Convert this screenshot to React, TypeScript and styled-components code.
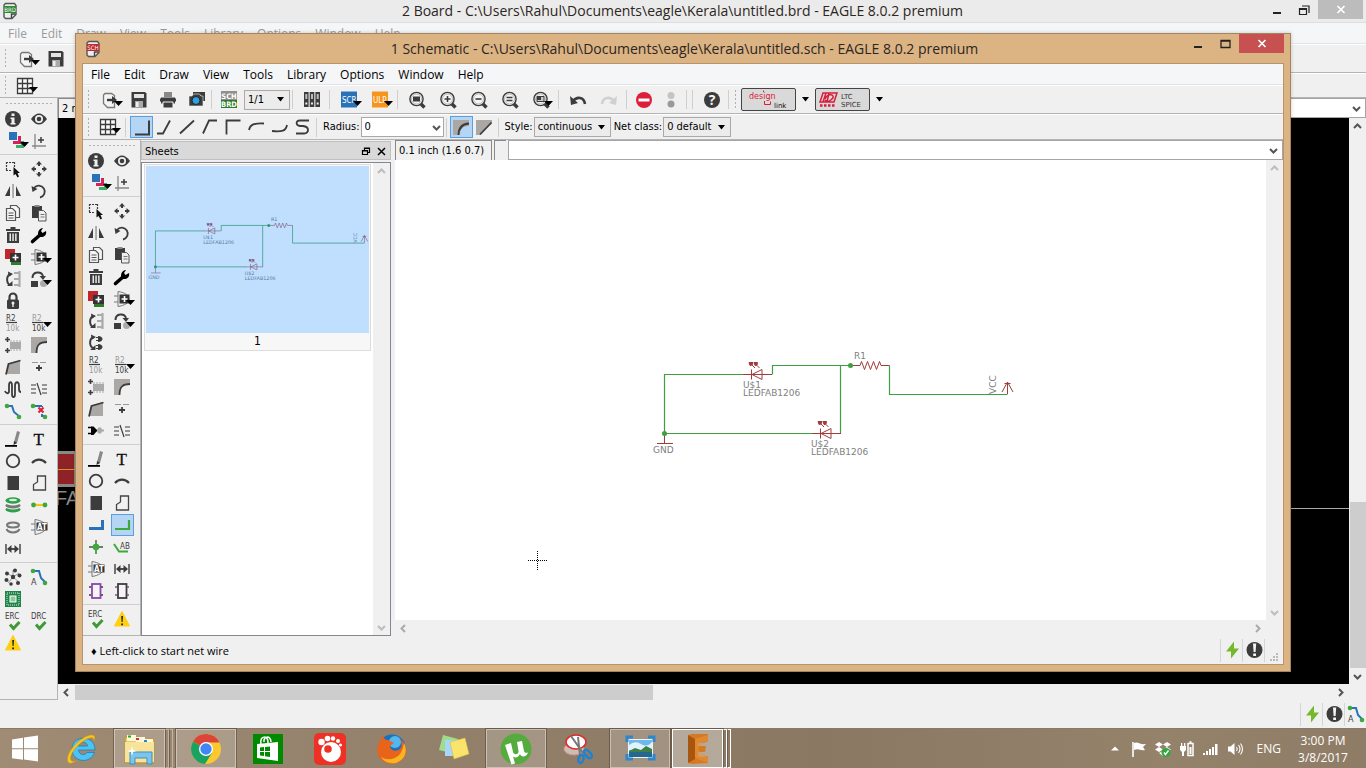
import React from "react";
import type { ReactNode } from "react";
import styled, { createGlobalStyle, css } from "styled-components";

const ui = '"DejaVu Sans Condensed", "DejaVu Sans", sans-serif';
const segoe = '"Open Sans", "Noto Sans", sans-serif';
const ink = "#3c3c3c";

const GlobalStyle = createGlobalStyle`
  * { box-sizing: border-box; }
  body { margin: 0; overflow: hidden; font: 11px/16px ${ui}; color: #000; }
  button, input, select { font: inherit; color: inherit; margin: 0; padding: 0; border: 0; background: none; border-radius: 0; outline: none; }
  svg { display: block; overflow: visible; flex: none; }
  h1, h2, p, ul { margin: 0; padding: 0; font-weight: normal; list-style: none; }
`;

/* ---------- drawings ---------- */

const Arr = ({ x, y }: { x: number; y: number }) => (
  <path d={`M${x} ${y}h9l-4.5 5z`} fill="#000" />
);
const Lens = ({ children }: { children?: ReactNode }) => (
  <g>
    <path d="M15.5 13.5l4 4" stroke={ink} strokeWidth="3.4" />
    <circle cx="11.5" cy="9" r="6.6" fill="#f5f5f5" stroke={ink} strokeWidth="1.4" />
    <circle cx="11.5" cy="9" r="5" fill="none" stroke="#aaa" strokeWidth=".8" />
    {children}
  </g>
);
const Line = ({ d, c = ink, w = 1.8 }: { d: string; c?: string; w?: number }) => (
  <path d={d} fill="none" stroke={c} strokeWidth={w} />
);
const Txt = ({ x, y, s, c = ink, children }: { x: number; y: number; s: number; c?: string; children: string }) => (
  <text x={x} y={y} fontSize={s} fill={c} fontFamily="DejaVu Sans Condensed, sans-serif">{children}</text>
);
const check = <path d="M9 13.500l3.500 4l6-6.500" fill="none" stroke="#3f9a35" strokeWidth="3" />;
const Gate = () => (
  <g fill="none" stroke="#777" strokeWidth="1">
    <path d="M8 2.500c7 1 11 4 11 7.500s-4 6.500-11 7.500zM4 7h4M4 13h4" />
  </g>
);

const icons: Record<string, ReactNode> = {
  info: <g><circle cx="12" cy="10" r="8" fill={ink} /><path d="M10.500 4.500h3v2.500h-3zM9.500 8.500h4v5.500h1v1.500h-5v-1.500h1v-4h-1z" fill="#f0f0f0" /></g>,
  eye: <g><path d="M4 10Q12-1 20 10Q12 21 4 10z" fill={ink} /><circle cx="12" cy="10" r="4" fill="#f0f0f0" /><circle cx="12" cy="10" r="2.300" fill={ink} /></g>,
  layers: <g><path d="M8 1h8v8h-8z" fill="#2a72b8" /><path d="M17 5h3v8h-8v-3h5z" fill="#d81e5b" /><path d="M20 10h3v7h-8v-3h5z" fill="#3aae68" /><Arr x={19} y={11} /></g>,
  origin: <g><Line d="M8 3v15M5 15h14" c="#888" w={1.300} /><Line d="M14 6v6M11 9h6" w={1.500} /></g>,
  group: <g><path d="M5 3.500h9M5 11.500h6M5.500 3v9M13.500 3v5" stroke={ink} fill="none" strokeDasharray="2 1" strokeWidth="1.200" /><path d="M12.500 8v8.500l2-1.500 2 3.500 1.500-1-1.500-3.500h2.500z" fill="#111" /></g>,
  move: <g fill={ink}><path d="M12 2l3 3.500h-2v1.500h-2v-1.500h-2zM12 18l3-3.500h-2v-1.500h-2v1.500h-2zM4 10l3.500-3v2h1.500v2h-1.500v2zM20 10l-3.500-3v2h-1.500v2h1.500v2z" /></g>,
  mirror: <g fill={ink}><path d="M9 5v10h-5zM15 5v10h5z" /><path d="M11.300 3h1.500v14h-1.500z" fill="#999" /></g>,
  rotate: <g><Line d="M7 7a6 6 0 1 1 6 9.500" w={1.800} /><path d="M4.500 5l1 6 5-3z" fill={ink} /></g>,
  copy: <g fill="#f4f4f4" stroke="#555" strokeWidth="1.200"><path d="M9.500 2.500h6l3 3v9h-9z" /><path d="M5.500 5.500h6l3 3v9h-9z" /><path d="M7.500 10h5M7.500 12.500h5M7.500 15h5" /></g>,
  paste: <g><path d="M5 3h10v12h-10z" fill={ink} /><path d="M7.500 2h5v2h-5z" fill="#888" /><path d="M11.500 7.500h5l2.500 2.500v8h-7.500z" fill="#eee" stroke="#555" /><Line d="M13.500 11.500h4M13.500 14h4" c="#777" w={1} /></g>,
  trash: <g fill={ink}><path d="M5 4h14v2h-14zM9.500 2h5v2h-5z" /><path d="M6 7h12v11h-12z" /><path d="M8.500 8.500h1.500v7.500h-1.500zM11.300 8.500h1.500v7.500h-1.500zM14.100 8.500h1.500v7.500h-1.500z" fill="#e8e8e8" /></g>,
  wrench: <g><path d="M5.500 16.500l8-7" stroke="#000" strokeWidth="3.600" strokeLinecap="round" /><path d="M11 10c0-4 1-6.500 5-7l-2 3 1.500 2 3.500-2c1 4-2 6.500-6 6z" fill="#000" /></g>,
  add: <g><path d="M4 2h10v10h-10z" fill="#c0272d" /><path d="M10 12h10v6h-10z" fill="#2f7d2a" /><path d="M9 6h11v9h-11z" fill="#333" /><Line d="M14.500 7.500v6M11.500 10.500h6" c="#fff" w={1.600} /></g>,
  gateAdd: <g><Gate /><path d="M9.500 5.500h10v9h-10z" fill="#333" /><Line d="M14.500 7v6M11.500 10h6" c="#fff" w={1.600} /><Arr x={16} y={11} /></g>,
  pinswap: <g><Line d="M10 5c-5 1-5 9-1 11" w={2} /><path d="M7 2.500l5 2.500-4.500 3zM6 17h5.500v-5z" fill={ink} /><Line d="M18.500 2v16M13 4h5M13 10h5M13 16h5" c="#aaa" w={2.200} /></g>,
  replace: <g><path d="M4 12h7v6h-7z" fill={ink} /><circle cx="16.500" cy="14.500" r="3.500" fill="#aaa" /><Line d="M5.500 9c0-7 9-7 10.500-2" w={2} /><path d="M12.500 7h6.500l-3 4z" fill={ink} /><Arr x={16} y={11} /></g>,
  gateswap: <g><Line d="M10 4c-5 1-5 9-1 11" w={2} /><path d="M7 1.500l5 2.500-4.500 3zM6 17h5.500v-5z" fill={ink} /><path d="M14 3c6 0 6 6 0 6zM14 11c6 0 6 6 0 6z" fill={ink} /><Line d="M12 4.500h2M12 7.500h2M12 12.500h2M12 15.500h2" w={1} /></g>,
  lock: <g><Line d="M8.500 9v-3a3.500 3.500 0 0 1 7 0v3" w={2.200} /><rect x="6" y="8.500" width="12" height="9.500" rx="1.500" fill={ink} /><circle cx="12" cy="12" r="1.500" fill="#f0f0f0" /><path d="M11.300 12h1.400v4h-1.400z" fill="#f0f0f0" /></g>,
  name: <g><Txt x={5} y={8} s={8}>R2</Txt><Line d="M5 9.500h11" w={1.200} /><Txt x={5} y={18} s={8} c="#999">10k</Txt></g>,
  value: <g><Txt x={5} y={8} s={8} c="#999">R2</Txt><Line d="M5 9.500h11" w={1.200} /><Txt x={5} y={18} s={8}>10k</Txt><Arr x={16} y={9} /></g>,
  smash: <g><path d="M9 7h11v7h-11z" fill="#aaa" /><path d="M10 5v11M13 5v11M16 5v11M19 5v11" stroke="#aaa" /><Line d="M6.500 2v5M4 4.500h5M6.500 13v5M4 15.500h5" w={1.600} /></g>,
  miter: <g><path d="M4 2h16v4c-6 0-8 4-8 12h-8z" fill="#aba7a5" /><path d="M10 18v-2c0-5 2-8 10-8v10z" fill="#f0f0f0" /><Line d="M9.500 18c0-8 3-11 10.500-11" w={1.800} /></g>,
  split: <g><path d="M5 17l2-10 12-4v14z" fill="#aba7a5" /><Line d="M5 17.500l2.500-10.500 12-3.500" w={1.800} /></g>,
  optimize: <g><Line d="M5 5.500h6M13 5.500h6" c="#999" w={1.200} /><Line d="M12 8v6M9 11h6" w={1.800} /></g>,
  meander: <Line d="M4 12c1 3 4 3 4 0v-5c0-5 3-5 3 0v8c0 4 3 4 3 0v-8c0-5 4-5 4 0v3q0 3 2 3" w={1.800} />,
  bus: <g><Line d="M4 6h5M4 10h5M4 14h5M15 6h5M15 10h5M15 14h5" c="#777" w={1.400} /><Line d="M10 4l4 12" w={1.200} /></g>,
  invoke: <g><path d="M4 6.500h4M4 12.500h4" stroke="#000" strokeWidth="1.500" /><path d="M7 5.500h2.500l4 4-4 4.500h-2.500z" fill="#000" /><path d="M20 8.500h-2c-1-4-5-2-5 1s4 5 5 1h2z" fill="#aaa" /></g>,
  route: <g><Line d="M6 5h5l2 6 6 5" c="#2a72b8" w={2} /><circle cx="6" cy="5" r="2.300" fill="#3fa83c" /><circle cx="18" cy="16" r="2.300" fill="#3fa83c" /></g>,
  ripup: <g><Line d="M6 5h9M15 5v10h4" c="#2a72b8" w={2} /><circle cx="6" cy="5" r="2.300" fill="#3fa83c" /><circle cx="18" cy="16" r="2.300" fill="#3fa83c" /><path d="M10 6h8v7h-8z" fill="#f0f0f0" /><Line d="M11.500 6.500l5 5M16.500 6.500l-5 5" c="#e0213a" w={2.200} /></g>,
  pencil: <g><path d="M16 2l3 1-3 11-3 1 0-2z" fill="#888" /><path d="M13 12l3 2-3.500 2z" fill="#333" /><path d="M4 16h12v1.800h-12z" fill="#000" /></g>,
  text: <text x="6.500" y="15.500" fontFamily="Liberation Serif, serif" fontSize="17" fill="#111" stroke="#111" strokeWidth=".3">T</text>,
  circle: <circle cx="12" cy="10" r="6.300" fill="none" stroke={ink} strokeWidth="1.800" />,
  arc: <Line d="M5 12c4-4.500 10-4.500 14 0" w={2.200} />,
  rect: <path d="M6.500 3h11.500v14h-11.500z" fill={ink} />,
  polygon: <Line d="M6.500 17v-5.500l4-2.500v-6h8v14z" c="#444" w={1.300} />,
  via: <g><ellipse cx="12" cy="14.500" rx="7.500" ry="3" fill="#2e9f48" /><ellipse cx="12" cy="11.500" rx="7.500" ry="3" fill="#f0f0f0" /><ellipse cx="12" cy="10.500" rx="7.500" ry="3" fill="#777" /><ellipse cx="12" cy="7.500" rx="7.500" ry="3" fill="#f0f0f0" /><ellipse cx="12" cy="5.500" rx="7.500" ry="3.300" fill="#2e9f48" /><ellipse cx="12" cy="5" rx="4" ry="1.200" fill="#d6f0d8" /></g>,
  signal: <g><Line d="M6 10h12" c="#f5c518" w={2.200} /><circle cx="6.500" cy="10" r="2.400" fill="#3fa83c" /><circle cx="18" cy="10" r="2.400" fill="#3fa83c" /></g>,
  hole: <g fill="none" stroke="#777" strokeWidth="2"><ellipse cx="12" cy="8" rx="6" ry="2.500" /><path d="M5.500 12c2 4.500 11 4.500 13 0" /></g>,
  attribute: <g><Gate /><path d="M9.500 5.500h11v8h-11z" fill="#333" /><text x="10" y="12.500" fontSize="8" fontWeight="bold" fill="#fff" fontFamily="DejaVu Sans Condensed, sans-serif">AT</text></g>,
  dimension: <g><Line d="M5 5v10M19 5v10" w={1.400} /><Line d="M7 10h10" w={1.800} /><path d="M6 10l4.500-4v8zM18 10l-4.500-4v8z" fill={ink} /></g>,
  ratsnest: <g><path d="M6 6l6 4M12 3v7M18 6l-6 4M12 10l6 5M12 10l-5 6" stroke="#999" /><g fill={ink}><circle cx="12" cy="10" r="2.200" /><circle cx="6" cy="6.500" r="2" /><circle cx="14" cy="3.500" r="2" /><circle cx="18.500" cy="8.500" r="2" /><circle cx="17" cy="16" r="2" /><circle cx="10" cy="17" r="1.800" /><circle cx="5.500" cy="13" r="2" /></g></g>,
  autoroute: <g><Line d="M6 4h6l2 7 5 5" c="#2a72b8" w={2} /><circle cx="6" cy="4" r="2.300" fill="#3fa83c" /><circle cx="18" cy="16" r="2.300" fill="#3fa83c" /><Txt x={4} y={18} s={9}>A</Txt></g>,
  drcbox: <g><path d="M4 2h16v16h-16z" fill="#1e8449" /><rect x="6" y="4" width="12" height="12" fill="none" stroke="#d9f0de" strokeDasharray="1 1" /><rect x="9" y="7" width="6" height="6" fill="#8bc99a" stroke="#fff" /></g>,
  erc: <g><Txt x={4} y={8} s={8}>ERC</Txt>{check}</g>,
  drc: <g><Txt x={4} y={8} s={8}>DRC</Txt>{check}</g>,
  warning: <g><path d="M12 2.500l7.500 14.500h-15z" fill="#ffcf10" stroke="#ffcf10" strokeLinejoin="round" /><path d="M11.200 7h1.800l-.4 6h-1zM11.200 14.500h1.800v1.700h-1.800z" fill="#222" /></g>,
  busline: <Line d="M5 13.500h13.500v-8.500" c="#2a72b8" w={3} />,
  net: <Line d="M5 14h14v-9" c="#3fa83c" w={2.200} />,
  junction: <g><Line d="M12 3v14M5 10h14" c="#3a5a3a" w={1.300} /><circle cx="12" cy="10" r="3.300" fill="#3fa83c" /></g>,
  label: <g><Line d="M4 7l5 7.500h9" c="#3fa83c" w={2} /><Txt x={10} y={12} s={8}>AB</Txt></g>,
  module: <g><rect x="8" y="3" width="8.500" height="14" fill="#f4f4f4" stroke="#8e44ad" strokeWidth="1.800" /><Line d="M5 6h2M5 14h2M17 6h2M17 14h2" w={1.400} /></g>,
  port: <g><rect x="8" y="3" width="8.500" height="14" fill="#f4f4f4" stroke={ink} strokeWidth="1.800" /><Line d="M5 6h2M5 14h2M17 6h2M17 14h2" c="#8e44ad" w={1.600} /></g>,
  open: <g><path d="M7 3.500h6.500l3 2v12h-7l-4-4v-8.500z" fill="#f3f3f3" stroke="#777" strokeWidth="1.300" /><Line d="M9 10h6" w={2.400} /><path d="M14 6l5 4-5 4z" fill={ink} /><Arr x={16} y={11} /></g>,
  save: <g><path d="M4.500 2h13.500l1.500 1.500v14h-15z" fill={ink} /><path d="M7 4h10v4h-10z" fill="#e4e4e4" /><path d="M8 11h8v6.500h-8z" fill="#aaa" /><path d="M9 12h2.500v5h-2.500z" fill="#eee" /></g>,
  print: <g><path d="M8 2h8v5h-8z" fill="#888" /><path d="M5 7.500h14v6h-14zM4 8.500h16v3h-16z" fill={ink} /><path d="M7 12h10v6h-10z" fill={ink} stroke="#f0f0f0" /></g>,
  camera: <g><path d="M8 2h12v9h-4v-6h-8z" fill={ink} /><path d="M4 6h3l1.500-2h6l1.500 2h2v10h-14z" fill={ink} stroke="#f0f0f0" strokeWidth=".6" /><circle cx="11" cy="10.500" r="4" fill="#2e9fe0" stroke="#222" /></g>,
  schbrd: <g><path d="M4 1h16v9h-16z" fill="#8f8f8f" /><path d="M4 10h16v8h-16z" fill="#2a7a2a" /><text x="12" y="8.500" textAnchor="middle" fontSize="7.500" fontWeight="bold" fill="#fff" fontFamily="DejaVu Sans Condensed">SCH</text><text x="12" y="17" textAnchor="middle" fontSize="7.500" fontWeight="bold" fill="#fff" fontFamily="DejaVu Sans Condensed">BRD</text></g>,
  library: <g><path d="M4 2h4.600v15h-4.600zM9.700 2h4.600v15h-4.600zM15.400 2h4.600v15h-4.600z" fill={ink} /><path d="M5.300 4h2v5h-2zM11 4h2v5h-2zM16.700 4h2v5h-2z" fill="#bbb" /><path d="M5.300 12.500h2v2h-2zM11 12.500h2v2h-2zM16.700 12.500h2v2h-2z" fill="#eee" /></g>,
  scr: <g><path d="M4 1.500h16v16h-16z" fill="#2a72b8" /><Txt x={5} y={13} s={8} c="#fff">SCR</Txt><Arr x={16} y={11} /></g>,
  ulp: <g><path d="M4 1.500h16v16h-16z" fill="#f7941e" /><Txt x={5} y={13} s={8} c="#fff">ULP</Txt><Arr x={16} y={11} /></g>,
  fit: <Lens><path d="M8 6.500h7v5h-7z" fill={ink} /></Lens>,
  zoomin: <Lens><Line d="M8.500 9h6M11.500 6v6" w={1.600} /></Lens>,
  zoomout: <Lens><Line d="M8.500 9h6" w={1.600} /></Lens>,
  redraw: <Lens><Line d="M8.500 7.500h6M8.500 10.500h6" w={1.500} /></Lens>,
  zoomsel: <g><Lens><path d="M8 6.500h7v5h-7z" fill="#ccc" stroke={ink} /><path d="M8 6.500h4v3.500h-4z" fill={ink} /></Lens><Arr x={15} y={11} /></g>,
  undo: <g><Line d="M19 14c-1-7-8-8-12-3" w={2.600} /><path d="M4 6l1 9 7-2z" fill={ink} /></g>,
  redo: <g><Line d="M5 14c1-7 8-8 12-3" w={2.600} c="#d0d0d0" /><path d="M20 6l-1 9-7-2z" fill="#d0d0d0" /></g>,
  stop: <g><circle cx="12" cy="10" r="8" fill="#dd1e3a" /><path d="M6.500 8.500h11v3h-11z" fill="#fff" /></g>,
  go: <g><circle cx="12" cy="5.500" r="3.500" fill="#c4c4c4" /><circle cx="12" cy="14" r="3.500" fill="#999" /></g>,
  help: <g><circle cx="12" cy="10" r="8" fill={ink} /><text x="12" y="15" textAnchor="middle" fontSize="14" fontWeight="bold" fill="#f4f4f4" fontFamily="Open Sans, sans-serif">?</text></g>,
  grid: <g><path d="M4.500 2.500h15v15h-15zM4.500 7.500h15M4.500 12.500h15M9.500 2.500v15M14.500 2.500v15" fill="#fafafa" stroke={ink} strokeWidth="1.300" /><Arr x={16} y={11} /></g>,
  b0: <Line d="M5 17.500h14v-14" w={2} />,
  b1: <Line d="M4 16.500h6l7-13" />,
  b2: <Line d="M4 16.500l14-13" />,
  b3: <Line d="M4 16.500l6-13h8" />,
  b4: <Line d="M4.500 17.500v-14h14" />,
  b5: <Line d="M4 13c1-5 4-7 15-6.500" />,
  b6: <Line d="M4 14c10 1 14 0 15-6" />,
  b7: <Line d="M18 3.500h-9c-5 0-4 5 0 5.500h3c7 1 6 7 1 7.500h-8" />,
  miterRound: <g><path d="M4 3h16v15h-16z" fill="#aba7a5" /><path d="M11 18c0-6 3-9 9-9v9z" fill="#b5d5f5" /><Line d="M9.500 18c0-7 3-11 10.500-11.500" w={1.800} /></g>,
  miterFlat: <g><path d="M4 3h16v3l-12 12h-4z" fill="#aba7a5" /><Line d="M8 17.500l11.500-12" w={1.800} /></g>,
  bolt: <path d="M14 1.500l-8 10h5l0 7 8-10h-5z" fill="#76b82a" />,
  alert: <g><circle cx="12.500" cy="10" r="8" fill={ink} /><path d="M11 3.500h3.200l-.6 8.500h-2zM11.200 13.500h2.800v2.500h-2.800z" fill="#f4f4f4" /></g>,
};

const Icon = ({ name }: { name: string }) => (
  <svg width="24" height="20" viewBox="0 0 24 20" aria-hidden="true">{icons[name]}</svg>
);
const Down = ({ c = "#000" }: { c?: string }) => (
  <svg width="9" height="5" viewBox="0 0 9 5" aria-hidden="true"><path d="M1 0h7l-3.500 4.500z" fill={c} /></svg>
);
const Chevron = ({ dir, c }: { dir: "up" | "down" | "left" | "right"; c: string }) => {
  const d = { up: "M1 6l3.500-3.500L8 6", down: "M1 3l3.500 3.500L8 3", left: "M6 1L2.500 4.500 6 8", right: "M3 1l3.500 3.500L3 8" }[dir];
  return <svg width="9" height="9" viewBox="0 0 9 9" aria-hidden="true"><path d={d} fill="none" stroke={c} strokeWidth="2" /></svg>;
};

/* ---------- layout parts ---------- */

const Desktop = styled.main`
  position: relative;
  display: flex;
  flex-direction: column;
  height: 100vh;
  overflow: hidden;
  background: #f0f0f0;
`;
const BoardWindow = styled.section`
  flex: 1;
  min-height: 0;
  display: flex;
  flex-direction: column;
`;
const SchematicWindow = styled.section`
  position: absolute;
  inset: 33px 75px 96px;
  display: flex;
  flex-direction: column;
  padding: 0 6px 6px;
  background: #dcb383;
  border: 1px solid #a5845f;
  box-shadow: 0 0 4px rgba(0, 0, 0, 0.2);
`;
const Client = styled.div`
  flex: 1;
  min-height: 0;
  display: flex;
  flex-direction: column;
  background: #f0f0f0;
  border: 1px solid #b8946a;
`;
const TitleBar = styled.header<{ $front?: boolean }>`
  display: grid;
  grid-template-columns: 1fr auto 1fr;
  align-items: center;
  flex: none;
  height: ${(p) => (p.$front ? 29 : 23)}px;
  padding: ${(p) => (p.$front ? "0 0 0 3px" : "0 3px 0 2px")};
  background: ${(p) => (p.$front ? "none" : "#ebebeb")};
  border-bottom: ${(p) => (p.$front ? "0" : "1px solid #dcdfe2")};
`;
const Title = styled.h1`
  text-align: center;
  font: 14px/20px ${segoe};
  color: #2b2622;
  white-space: nowrap;
`;
const Caption = styled.div`
  display: flex;
  align-self: flex-start;
  justify-self: end;
`;
const CaptionButton = styled.button<{ $close?: string }>`
  display: grid;
  place-items: center;
  width: ${(p) => (p.$close ? 45 : 27)}px;
  height: 19px;
  background: ${(p) => p.$close || "none"};
`;
const MenuBar = styled.nav<{ $dim?: boolean }>`
  display: flex;
  align-items: center;
  flex: none;
  height: 21px;
  padding: 1px 0 0 1px;
  background: #f5f6f7;
  border-bottom: 1px solid #e3e4e6;
  color: ${(p) => (p.$dim ? "#9a9a9a" : "#000")};
  font: 12px/18px ${segoe};
`;
const MenuItem = styled.button`
  padding: 0 7px;
`;
const Bar = styled.div<{ $h: number }>`
  display: flex;
  align-items: center;
  flex: none;
  height: ${(p) => p.$h}px;
  border-top: 1px solid #fff;
  border-bottom: 1px solid #b4b4b4;
  white-space: nowrap;
`;
const Grip = styled.i<{ $across?: boolean }>`
  flex: none;
  ${(p) =>
    p.$across
      ? css`height: 3px; margin: 4px 5px 3px; background: radial-gradient(circle, #b0b0b0 1px, transparent 1px) 0 0 / 4px 3px;`
      : css`width: 3px; height: 21px; margin: 0 4px; background: radial-gradient(circle, #b0b0b0 1px, transparent 1px) 0 0 / 3px 4px;`}
`;
const Tool = styled.button<{ $w?: number; $on?: boolean }>`
  display: grid;
  place-content: center;
  flex: none;
  width: ${(p) => p.$w || 31}px;
  height: 22px;
  ${(p) => p.$on && css`background: #b5d5f5; box-shadow: inset 0 0 0 1px #5c9fe0;`}
`;
const Sep = styled.i<{ $gap?: "tight" | "wide" }>`
  flex: none;
  width: 1px;
  height: 19px;
  margin: ${(p) => (p.$gap === "tight" ? "0 1px" : p.$gap === "wide" ? "0 4px" : "0 3px 0 2px")};
  background: #cfcfcf;
`;
const SelectWrap = styled.label<{ $w: number; $edit?: boolean }>`
  display: grid;
  align-items: center;
  flex: none;
  width: ${(p) => p.$w}px;
  height: 20px;
  background: ${(p) => (p.$edit ? "#fff" : "#ececec")};
  border: 1px solid #a9a9a9;
  > * { grid-area: 1 / 1; }
  > svg { justify-self: end; margin-right: ${(p) => (p.$edit ? 2 : 4)}px; pointer-events: none; }
`;
const Select = styled.select`
  appearance: none;
  width: 100%;
  height: 18px;
  padding-left: 3px;
`;
const FieldLabel = styled.label`
  padding: 0 1px 0 3px;
`;
const BrandButton = styled.button`
  display: grid;
  place-items: center;
  width: 55px;
  height: 23px;
  background: #d9d9d9;
  border: 1px solid #444;
  border-radius: 2px;
`;
const Body = styled.div`
  flex: 1;
  min-height: 0;
  display: flex;
`;
const Palette = styled.div`
  display: flex;
  flex-direction: column;
  flex: none;
  width: 58px;
  border-right: 1px solid #b4b4b4;
  border-bottom: 1px solid #b4b4b4;
`;
const ToolGrid = styled.div`
  display: grid;
  grid-template-columns: 25px 28px;
  grid-auto-rows: 22px;
  justify-items: center;
  & + & {
    margin-top: 2px;
    padding-top: 3px;
    border-top: 1px solid #cfcfcf;
  }
`;
const Column = styled.div`
  flex: 1;
  min-width: 0;
  display: flex;
  flex-direction: column;
`;
const CommandRow = styled.div`
  display: flex;
  flex: none;
  gap: 2px;
  height: 20px;
`;
const Coords = styled.output`
  width: 97px;
  padding: 2px 3px;
  border: 1px solid #888;
  border-width: 1px 1px 0 1px;
  white-space: nowrap;
  overflow: hidden;
`;
const CommandMark = styled.i`
  width: 12px;
  border: 1px solid #888;
  border-width: 1px 0 0 1px;
`;
const CommandBox = styled.label`
  flex: 1;
  display: flex;
  align-items: center;
  padding-right: 4px;
  background: #fff;
  border: 1px solid #a4a4aa;
  input { flex: 1; min-width: 0; }
`;
const View = styled.div`
  flex: 1;
  min-height: 0;
  display: grid;
  grid-template-columns: minmax(0, 1fr) 17px;
  grid-template-rows: minmax(0, 1fr) 16px;
`;
const Canvas = styled.div<{ $c: string }>`
  overflow: hidden;
  background: ${(p) => p.$c};
`;
const Scroll = styled.div<{ $v?: boolean }>`
  display: flex;
  flex-direction: ${(p) => (p.$v ? "column" : "row")};
  background: #f0f0f0;
`;
const ScrollButton = styled.button`
  display: grid;
  place-content: center;
  flex: none;
  width: 17px;
  height: 16px;
`;
const Track = styled.div<{ $v?: boolean; $end?: boolean }>`
  flex: 1;
  display: flex;
  flex-direction: ${(p) => (p.$v ? "column" : "row")};
  justify-content: ${(p) => (p.$end ? "flex-end" : "flex-start")};
`;
const Thumb = styled.i<{ $v?: boolean; $size: number }>`
  background: #cdcdcd;
  ${(p) => (p.$v ? css`height: ${p.$size}%; margin-left: 1px;` : css`width: ${p.$size}%; margin-top: 1px;`)}
`;
const Dock = styled.aside`
  display: flex;
  flex-direction: column;
  flex: none;
  width: 250px;
  margin-right: 4px;
  padding-top: 1px;
`;
const DockTitle = styled.header`
  display: flex;
  align-items: center;
  gap: 6px;
  height: 19px;
  padding: 2px 4px 0 3px;
  margin-bottom: 2px;
  background: #d9d9d9;
  border: 1px solid #c0c0c0;
  h2 { flex: 1; font-size: 11px; }
`;
const SheetList = styled.div`
  flex: 1;
  min-height: 0;
  display: flex;
  background: #fff;
  border: 1px solid #828790;
`;
const SheetCard = styled.figure`
  align-self: flex-start;
  flex: 1;
  margin: 1px 2px 0;
  padding: 1px;
  border: 1px solid #dcdcdc;
  background: #f7f7f7;
  text-align: center;
  font: 12px/16px ${ui};
`;
const Preview = styled.div`
  height: 167px;
  background: #c0dfff;
`;
const StatusBar = styled.footer`
  display: flex;
  align-items: center;
  flex: none;
  height: 28px;
  padding-left: 8px;
  p { flex: 1; padding-top: 1px; font: 11px/16px ${segoe}; }
`;
const StatusCell = styled.span<{ $grip?: boolean }>`
  display: grid;
  place-content: ${(p) => (p.$grip ? "end center" : "center")};
  width: ${(p) => (p.$grip ? 19 : 22)}px;
  height: 23px;
  border-left: 1px solid #d5d5d5;
`;
const Taskbar = styled.nav`
  display: flex;
  align-items: center;
  flex: none;
  height: 40px;
  background: linear-gradient(90deg, #a08b74, #93816b 30%, #8a7863 60%, #94826b 85%, #8f7c66);
  border-top: 1px solid #8a7966;
  color: #fff;
`;
const TaskButton = styled.button<{ $open?: boolean; $active?: boolean }>`
  display: grid;
  place-content: center;
  flex: none;
  width: 60px;
  height: 39px;
  margin: 0 1px;
  ${(p) => p.$open && css`background: rgba(255, 255, 255, 0.18); border: 1px solid rgba(255, 255, 255, 0.4); outline: 1px solid rgba(70, 55, 40, 0.45); outline-offset: 0;`}
  ${(p) => p.$active && css`background: rgba(255, 255, 255, 0.35); border-color: #fff;`}
`;
const TaskStack = styled.div<{ $active?: boolean }>`
  display: flex;
  width: 60px;
  margin: 0 1px;
  ${TaskButton} { width: 51px; margin: 0; }
  i {
    width: 4px;
    height: 39px;
    border: 1px solid ${(p) => (p.$active ? "#fff" : "#c0b4a5")};
    border-left-color: #6e5f50;
  }
`;
const StartButton = styled.button`
  display: grid;
  place-content: center;
  width: 51px;
  height: 39px;
`;
const Tray = styled.div`
  display: flex;
  align-items: center;
  gap: 8px;
  margin-left: auto;
  padding-right: 17px;
  font: 12px/17px ${segoe};
`;
const Overflow = styled.button`
  padding: 4px 4px 4px 0;
`;
const Language = styled.span`
  margin-left: 6px;
`;
const Clock = styled.time`
  width: 52px;
  margin-left: 8px;
  text-align: center;
  white-space: nowrap;
`;

/* ---------- composed widgets ---------- */

const menus = ["File", "Edit", "Draw", "View", "Tools", "Library", "Options", "Window", "Help"];
const Menu = ({ dim }: { dim?: boolean }) => (
  <MenuBar $dim={dim}>{menus.map((m) => <MenuItem key={m} type="button">{m}</MenuItem>)}</MenuBar>
);

const Tools = ({ names, w, on }: { names: string[]; w?: number; on?: string }) => (
  <>{names.map((n) => <Tool key={n} type="button" aria-label={n} $w={w} $on={on === n}><Icon name={n} /></Tool>)}</>
);

const PaletteOf = ({ groups, on }: { groups: string[][]; on?: string }) => (
  <Palette>
    <Grip $across />
    {groups.map((g, i) => (
      <ToolGrid key={i}>
        {g.map((n, k) => (n ? <Tool key={n} type="button" aria-label={n} $w={23} $on={on === n}><Icon name={n} /></Tool> : <span key={k} />))}
      </ToolGrid>
    ))}
  </Palette>
);

const FileIcon = ({ text, color }: { text: string; color: string }) => (
  <svg width="16" height="18" viewBox="0 0 16 18" aria-hidden="true">
    <path d="M3.500 1.500h9l1.500 2v9l-4 4h-6.500l-1.500-1.500v-12z" fill="#eee" stroke="#555" strokeWidth="1.400" />
    <path d="M9.500 16v-4h4" fill="none" stroke="#444" strokeWidth="1.400" />
    <path d="M2 4h12v7h-12z" fill={color} />
    <text x="8" y="10" textAnchor="middle" fontSize="6" fill="#fff" fontFamily="DejaVu Sans Condensed">{text}</text>
  </svg>
);

const CaptionButtons = ({ front }: { front?: boolean }) => (
  <Caption>
    <CaptionButton type="button" aria-label="Minimize"><svg width="9" height="9" viewBox="0 0 9 9"><path d="M0 7h8v2h-8z" fill="#222" /></svg></CaptionButton>
    <CaptionButton type="button" aria-label="Maximize">
      <svg width="11" height="10" viewBox="0 0 11 10">
        {front ? <path d="M1 1.500h9v7h-9zM0.500 2h10" fill="none" stroke="#222" strokeWidth="1.300" /> : <path d="M.5 3.500h7v6h-7zM.5 4.500h7M3 1h7v7" fill="none" stroke="#222" strokeWidth="1.200" />}
      </svg>
    </CaptionButton>
    <CaptionButton type="button" aria-label="Close" $close={front ? "#c75050" : "#bcbcbc"}>
      <svg width="8" height="7" viewBox="0 0 8 7"><path d="M.5 0l7 7M7.500 0l-7 7" stroke="#fff" strokeWidth="1.700" /></svg>
    </CaptionButton>
  </Caption>
);

const HScroll = ({ c, size }: { c: string; size?: number }) => (
  <Scroll>
    <ScrollButton type="button" aria-label="Scroll left"><Chevron dir="left" c={c} /></ScrollButton>
    <Track>{size && <Thumb $size={size} />}</Track>
    <ScrollButton type="button" aria-label="Scroll right"><Chevron dir="right" c={c} /></ScrollButton>
  </Scroll>
);
const VScroll = ({ c, size }: { c: string; size?: number }) => (
  <Scroll $v>
    <ScrollButton type="button" aria-label="Scroll up"><Chevron dir="up" c={c} /></ScrollButton>
    <Track $v $end>{size && <Thumb $v $size={size} />}</Track>
    <ScrollButton type="button" aria-label="Scroll down"><Chevron dir="down" c={c} /></ScrollButton>
  </Scroll>
);

const Command = ({ coords }: { coords: string }) => (
  <CommandRow>
    <Coords>{coords}</Coords>
    <CommandMark />
    <CommandBox><input type="text" aria-label="Command" /><Chevron dir="down" c="#555" /></CommandBox>
  </CommandRow>
);

const Led = ({ x, y, part }: { x: number; y: number; part: string }) => (
  <g transform={`translate(${x} ${y})`} stroke={part} fill="none">
    <path d="M-14 0.500h29M-5.500-4.500v10M-5 .5l10-5v10z" />
    <path d="M-8-11.500h4l-1 2.500-2 .5zM-3-11.500h3.500l-.5 2.500-2 .5z" fill={part} />
    <path d="M-5-9l3 3M-.500-9l3 3" />
  </g>
);

const Circuit = ({ net, part, label, size }: { net: string; part: string; label: string; size: number }) => (
  <g>
    <path d="M269.500 272.500v-59h79M377.500 213.500v-9h78M445.500 204.500v68M269.500 272.500h148M494.500 204.500v29h118" fill="none" stroke={net} strokeWidth="1.200" />
    <Led x={362} y={213} part={part} />
    <Led x={431} y={272} part={part} />
    <path d="M456 204.500h9l1.500-4 3 8 3-8 3 8 3-8 3 8 3-8 1.500 4h8.500M269.500 273v9M262 282.500h16M612.500 233v-12M607 231l5.500-10 5.500 10M609.500 222.500h6" fill="none" stroke={part} />
    <circle cx="269.500" cy="272.500" r="2.500" fill={net} />
    <circle cx="455.500" cy="204.500" r="2.500" fill={net} />
    <g fill={label} fontSize={size} fontFamily="DejaVu Sans, sans-serif">
      <text x="348" y="227">U$1</text>
      <text x="348" y="235">LEDFAB1206</text>
      <text x="416" y="286">U$2</text>
      <text x="416" y="294">LEDFAB1206</text>
      <text x="459" y="198">R1</text>
      <text x="258" y="292">GND</text>
      <text transform="translate(601 233) rotate(-90)">VCC</text>
    </g>
  </g>
);

const boardTools = [
  ["info", "eye", "layers", "origin"],
  ["group", "move", "mirror", "rotate", "copy", "paste", "trash", "wrench", "add", "gateAdd", "pinswap", "replace", "lock", "", "name", "value", "smash", "miter", "split", "optimize", "meander", "bus", "route", "ripup"],
  ["pencil", "text", "circle", "arc", "rect", "polygon", "via", "signal", "hole", "attribute", "dimension", ""],
  ["ratsnest", "autoroute", "drcbox", "", "erc", "drc", "warning"],
];
const schematicTools = [
  ["info", "eye", "layers", "origin"],
  ["group", "move", "mirror", "rotate", "copy", "paste", "trash", "wrench", "add", "gateAdd", "pinswap", "replace", "gateswap", "", "name", "value", "smash", "miter", "split", "optimize", "invoke", "bus"],
  ["pencil", "text", "circle", "arc", "rect", "polygon", "busline", "net", "junction", "label", "attribute", "dimension", "module", "port"],
  ["erc", "warning"],
];

/* ---------- taskbar drawings ---------- */

const Art = ({ children }: { children: ReactNode }) => (
  <svg width="32" height="32" viewBox="0 0 32 32" aria-hidden="true">{children}</svg>
);
const art = {
  start: <Art><path d="M2 6.500l11-1.700v10.500h-11zM14 4.600l14-2.200v12.900h-14zM2 16.300h11v10.500l-11-1.500zM14 16.300h14v12.200l-14-2z" fill="#fff" /></Art>,
  ie: <Art><path d="M29 17H12.500c.5 5 6.500 6 8.500 2.500h7.500c-4 12-22.500 10-22.500-3.500 0-14 23-15 23 1zM12.500 13h9c-.5-5-8.500-5-9 0z" fill="#4cc3f3" stroke="#1a7fc0" strokeWidth=".8" /><path d="M3 30c-6-5 6-22 18-27 8-3 9 1 7 5 0-4-3-4-8-1.500C10 12 1 25 6 28c1 .6 3 .3 5-.5-3 2-6 3.500-8 2.500z" fill="#f7c51e" stroke="#c98f10" strokeWidth=".5" /></Art>,
  explorer: <Art><path d="M1 4h12l2 2h15v24h-29z" fill="#e6c766" stroke="#b79432" /><path d="M3 2h9v6h-9zM12 4h9v6h-9zM20 6h9v6h-9z" fill="#fff8d8" /><path d="M4 2.500h3v2h-3z" fill="#2a2" /><path d="M12 5h3v2h-3z" fill="#c33" /><path d="M20 7h3v2h-3z" fill="#28c" /><path d="M1 9h29v20h-29z" fill="#f7e39a" /><path d="M6 31v-12h22v12h-5v-6h-12v6z" fill="#7cc4ea" stroke="#3d8fc2" /><path d="M8 13l1 4 4 1-4 1-1 4-1-4-4-1 4-1z" fill="#fff" /></Art>,
  chrome: <Art><circle cx="16" cy="16" r="15" fill="#fbc82e" /><path d="M16 16L3 8.500A15 15 0 0 1 29.500 9.500H16z" fill="#db4437" /><path d="M16 16L3 8.500A15 15 0 0 0 15 31l7-11z" fill="#1aa260" /><circle cx="16" cy="16" r="7" fill="#fff" /><circle cx="16" cy="16" r="5.700" fill="#4285f4" /></Art>,
  store: <Art><path d="M1 1h30v30h-30z" fill="#008a00" /><path d="M9 11c-2-9 8-9 7-1M12 9c-1-6 7-7 7 0" fill="none" stroke="#fff" strokeWidth="1.500" /><path d="M5 11l21-2v19l-21-3z" fill="#fff" /><path d="M8 14.500l4-.5v4h-4zM13 14l5-.6v4.600h-5zM8 19h4v4l-4-.6zM13 19h5v5l-5-.7z" fill="#008a00" /></Art>,
  gom: <Art><rect width="32" height="32" rx="5" fill="#ee3124" /><circle cx="17" cy="19" r="10" fill="#fff" /><circle cx="14" cy="16" r="3.800" fill="#ee3124" /><circle cx="7.500" cy="9" r="3.200" fill="#fff" /><circle cx="13.500" cy="5.500" r="2.800" fill="#fff" /><circle cx="19" cy="5.500" r="2.200" fill="#fff" /><circle cx="24" cy="8" r="2" fill="#fff" /><circle cx="26.500" cy="12" r="1.600" fill="#fff" /></Art>,
  firefox: <Art><circle cx="16" cy="15" r="13.500" fill="#1d6fc0" /><circle cx="19" cy="9" r="6" fill="#55b7ee" /><path d="M4 8l2-5 4 4c4 0 5 2 8 3l-4 3c0 5 7 6 10 3 3-4 1-8 0-10 7 5 8 14 3 20-6 7-19 6-24-2-3-5-2-11 1-16z" fill="#e8641b" /><path d="M28 10c4 8 1 17-8 20-7 1-12-1-15-6 9 5 21 2 23-14z" fill="#fbb321" /></Art>,
  notes: <Art><path d="M5 2l15 4-3 15-16-4z" fill="#9fdc8c" /><path d="M7 7h17v16h-17z" fill="#a9d6f5" /><path d="M12 9l15-4 4 16-15 5z" fill="#fbe46c" stroke="#d6b93a" strokeWidth=".5" /></Art>,
  utorrent: <Art><circle cx="16" cy="16" r="15.500" fill="#55ab3e" /><path d="M5 12l6-2 2 9c.5 3 6 3 5.500-1l-1.500-9 5-1 2 10c.5 2 2 2 4 1.500-1.500 5-7 5-8 1.500-2 4-5 4-7 2.500l2 7-3.500 1z" fill="#fff" /></Art>,
  snip: <Art><ellipse cx="12" cy="16" rx="10" ry="6" fill="#c9bfb5" stroke="#e08f8f" /><ellipse cx="14" cy="9" rx="10" ry="7" fill="#fff" stroke="#e02b2b" strokeWidth="1.600" /><path d="M9 3l12 17M16 4l2 18" stroke="#777" strokeWidth="2" /><g fill="none" stroke="#1f82d0" strokeWidth="2.400"><ellipse cx="26" cy="21" rx="5" ry="2.500" transform="rotate(50 26 21)" /><ellipse cx="19" cy="26" rx="2.500" ry="4" transform="rotate(15 19 26)" /></g></Art>,
  photo: <Art><path d="M4 6h25v19h-25z" fill="#e8f4fc" /><path d="M5 7h23v17h-23z" fill="#6db9ec" /><path d="M5 12q6-5 12-1t11-2v8h-23z" fill="#e2f2fb" /><path d="M5 18l6-3 6 2 5-4 6 3v4h-23z" fill="#3f7f4a" /><path d="M5 19h23v5h-23z" fill="#24688f" /><path d="M3 9v-5h6M24 4h6v5M3 21v5h6M24 26h6v-5" fill="none" stroke="#2f86cc" strokeWidth="3" /></Art>,
  eagle: <Art><path d="M6 2l4-1h16v7l-4 2h-6v3h8l-1 6h-7v4c3 2 6 0 10 0v7l-16 1-4-1z" fill="#d57a22" /><path d="M6 2l7 4v20l-7 4z" fill="#a8550f" /><path d="M13 6l13-4v5l-5 3c-6 3-6 9 0 11l5 3v6l-13-5z" fill="#e8933a" opacity=".55" /></Art>,
};

export default function App() {
  return (
    <>
      <GlobalStyle />
      <Desktop>
        <BoardWindow aria-label="Board editor">
          <TitleBar>
            <FileIcon text="BRD" color="#2f8a35" />
            <Title>2 Board - C:\Users\Rahul\Documents\eagle\Kerala\untitled.brd - EAGLE 8.0.2 premium</Title>
            <CaptionButtons />
          </TitleBar>
          <Menu dim />
          <Bar $h={29}><Grip /><Tools names={["open"]} /><Tools names={["save"]} w={27} /></Bar>
          <Bar $h={25}><Grip /><Tools names={["grid"]} w={27} /></Bar>
          <Body>
            <PaletteOf groups={boardTools} />
            <Column>
              <Command coords="2 mil (0 0)" />
              <View>
                <Canvas $c="#000">
                  <svg width="100%" height="100%" aria-hidden="true">
                    <path d="M0 333h17v36h-17z" fill="#888" />
                    <path d="M0 336h16v30h-16z" fill="#8f2226" />
                    <path d="M0 351.500h17" stroke="#c8962a" />
                    <text x="-3" y="387" fontSize="20" fill="#888" fontFamily="Liberation Sans, sans-serif">FA</text>
                    <line x1="20" x2="100%" y1="390.500" y2="390.500" stroke="#aaa" />
                  </svg>
                </Canvas>
                <VScroll c="#555" size={31} />
                <HScroll c="#555" size={46} />
              </View>
            </Column>
          </Body>
          <StatusBar>
            <p />
            <StatusCell><Icon name="bolt" /></StatusCell>
            <StatusCell><Icon name="alert" /></StatusCell>
            <StatusCell><Icon name="autoroute" /></StatusCell>
          </StatusBar>
        </BoardWindow>

        <SchematicWindow aria-label="Schematic editor">
          <TitleBar $front>
            <FileIcon text="SCH" color="#c1272d" />
            <Title>1 Schematic - C:\Users\Rahul\Documents\eagle\Kerala\untitled.sch - EAGLE 8.0.2 premium</Title>
            <CaptionButtons front />
          </TitleBar>
          <Client>
            <Menu />
            <Bar $h={29}>
              <Grip />
              <Tools names={["open"]} />
              <Tools names={["save"]} w={27} />
              <Tools names={["print"]} />
              <Tools names={["camera"]} w={27} />
              <Sep $gap="tight" />
              <Tools names={["schbrd"]} />
              <SelectWrap $w={46}><Select aria-label="Sheet"><option>1/1</option></Select><Down /></SelectWrap>
              <Sep />
              <Tools names={["library"]} />
              <Sep />
              <Tools names={["scr", "ulp"]} />
              <Sep />
              <Tools names={["fit", "zoomin", "zoomout", "redraw", "zoomsel"]} />
              <Sep />
              <Tools names={["undo", "redo"]} />
              <Sep />
              <Tools names={["stop", "go"]} w={27} />
              <Sep />
              <Sep />
              <Tools names={["help"]} />
              <Sep $gap="tight" />
              <Grip />
              <BrandButton type="button" aria-label="design link">
                <svg width="51" height="19" viewBox="0 0 51 19">
                  <text x="6" y="9" fontSize="8" fill="#d81e3a" fontFamily="DejaVu Sans">design</text>
                  <text x="31" y="18" fontSize="7" fill="#111" fontFamily="DejaVu Sans">link</text>
                  <path d="M20.500 2v-1.500M21.500 11v3.500h6v-3" stroke="#d81e3a" fill="none" />
                </svg>
              </BrandButton>
              <Tool type="button" aria-label="design link options" $w={19}><Down /></Tool>
              <BrandButton type="button" aria-label="LTC Spice">
                <svg width="51" height="19" viewBox="0 0 51 19">
                  <path d="M6 3h14l-3 9h-14zM9 3l-3 9M8 9c2-5 7-5 8-3s-5 8-8 4M12 3l-2 9" fill="none" stroke="#d81e3a" strokeWidth="1.500" />
                  <path d="M3 15.500h2.500M7 15.500h2.500M11 15.500h2.500M15 15.500h2.500" stroke="#d81e3a" strokeWidth="2.500" />
                  <text x="24" y="9" fontSize="7" fill="#333" fontFamily="DejaVu Sans">LTC</text>
                  <text x="24" y="17" fontSize="7" fill="#333" fontFamily="DejaVu Sans">SPICE</text>
                </svg>
              </BrandButton>
              <Tool type="button" aria-label="LTC Spice options" $w={19}><Down /></Tool>
            </Bar>
            <Bar $h={26}>
              <Grip />
              <Tools names={["grid"]} w={27} />
              <Sep $gap="wide" />
              <Tools names={["b0", "b1", "b2", "b3", "b4", "b5", "b6", "b7"]} w={23} on="b0" />
              <Sep />
              <FieldLabel htmlFor="radius">Radius:</FieldLabel>
              <SelectWrap $w={83} $edit><Select id="radius"><option>0</option></Select><Chevron dir="down" c="#555" /></SelectWrap>
              <Sep />
              <Tools names={["miterRound", "miterFlat"]} w={23} on="miterRound" />
              <Sep />
              <FieldLabel htmlFor="style">Style:</FieldLabel>
              <SelectWrap $w={77}><Select id="style"><option>continuous</option></Select><Down /></SelectWrap>
              <FieldLabel htmlFor="netclass">Net class:</FieldLabel>
              <SelectWrap $w={68}><Select id="netclass"><option>0 default</option></Select><Down /></SelectWrap>
            </Bar>
            <Body>
              <PaletteOf groups={schematicTools} on="net" />
              <Dock>
                <DockTitle>
                  <h2>Sheets</h2>
                  <button type="button" aria-label="Float"><svg width="9" height="9" viewBox="0 0 9 9"><path d="M.5 3.500h5v4h-5zM.500 4h5M2.500 3v-2h5v4.500h-2M2.500 1.500h5" fill="none" stroke="#000" strokeWidth="1.200" /></svg></button>
                  <button type="button" aria-label="Close panel"><svg width="9" height="9" viewBox="0 0 9 9"><path d="M1 1l7 7M8 1l-7 7" stroke="#000" strokeWidth="1.500" /></svg></button>
                </DockTitle>
                <SheetList>
                  <SheetCard>
                    <Preview>
                      <svg width="100%" height="100%" viewBox="254 107 366 274" aria-label="Sheet 1">
                        <Circuit net="#2f9a78" part="#7d5a78" label="#587a9e" size={8} />
                      </svg>
                    </Preview>
                    <figcaption>1</figcaption>
                  </SheetCard>
                  <VScroll c="#bdbdbd" />
                </SheetList>
              </Dock>
              <Column>
                <Command coords="0.1 inch (1.6 0.7)" />
                <View>
                  <Canvas $c="#fff">
                    <svg width="100%" height="100%" aria-label="Schematic">
                      <g transform="translate(0 1)">
                        <Circuit net="#3f9f3f" part="#a03c3c" label="#808080" size={9} />
                        <path d="M133 399.500h19M142.500 390v19" stroke="#000" strokeDasharray="1 1" />
                      </g>
                    </svg>
                  </Canvas>
                  <VScroll c="#bdbdbd" />
                  <HScroll c="#aaa" />
                </View>
              </Column>
            </Body>
            <StatusBar>
              <p>♦ Left-click to start net wire</p>
              <StatusCell><Icon name="bolt" /></StatusCell>
              <StatusCell><Icon name="alert" /></StatusCell>
              <StatusCell $grip><svg width="9" height="9" viewBox="0 0 9 9"><path d="M6 0h2v2h-2zM3 3h2v2h-2zM6 3h2v2h-2zM0 6h2v2h-2zM3 6h2v2h-2zM6 6h2v2h-2z" fill="#bbb" /></svg></StatusCell>
            </StatusBar>
          </Client>
        </SchematicWindow>

        <Taskbar aria-label="Taskbar">
          <StartButton type="button" aria-label="Start">{art.start}</StartButton>
          <TaskButton type="button" aria-label="Internet Explorer">{art.ie}</TaskButton>
          <TaskStack><TaskButton type="button" aria-label="File Explorer" $open>{art.explorer}</TaskButton><i /><i /></TaskStack>
          <TaskButton type="button" aria-label="Chrome" $open>{art.chrome}</TaskButton>
          <TaskButton type="button" aria-label="Store">{art.store}</TaskButton>
          <TaskButton type="button" aria-label="GOM Player">{art.gom}</TaskButton>
          <TaskButton type="button" aria-label="Firefox">{art.firefox}</TaskButton>
          <TaskButton type="button" aria-label="Sticky Notes">{art.notes}</TaskButton>
          <TaskButton type="button" aria-label="uTorrent" $open>{art.utorrent}</TaskButton>
          <TaskButton type="button" aria-label="Snipping Tool">{art.snip}</TaskButton>
          <TaskButton type="button" aria-label="Photos" $open>{art.photo}</TaskButton>
          <TaskStack $active><TaskButton type="button" aria-label="EAGLE" $open $active>{art.eagle}</TaskButton><i /><i /></TaskStack>
          <Tray>
            <Overflow type="button" aria-label="Show hidden icons"><svg width="8" height="5" viewBox="0 0 8 5"><path d="M0 4.500l4-4 4 4z" fill="#fff" /></svg></Overflow>
            <svg width="16" height="16" viewBox="0 0 16 16"><path d="M2 1v15" stroke="#fff" strokeWidth="1.600" /><path d="M3 2c4-2 5 2 12 1l-3 3 2 3c-5 1-6-2-11 0z" fill="#fff" /></svg>
            <svg width="16" height="16" viewBox="0 0 16 16"><path d="M4 1l4 2.500-4 2.500-4-2.500zM12 1l4 2.500-4 2.500-4-2.500zM4 6l4 2.500-4 2.500-4-2.500zM12 6l4 2.500-4 2.500-4-2.500zM4 12l4-2 4 2-4 3z" fill="#fff" /><circle cx="11" cy="11.500" r="4.500" fill="#2fa83c" /><path d="M9 11.500l1.500 2 3-4" fill="none" stroke="#fff" strokeWidth="1.400" /></svg>
            <svg width="16" height="16" viewBox="0 0 16 16"><path d="M9 2.500h5v12h-5zM10.500 1h2" fill="none" stroke="#fff" strokeWidth="1.500" /><path d="M10.500 6h2v7h-2zM1 5h6v4l-2 2v4h-2v-4l-2-2zM2 2h1.300v3h-1.300zM5 2h1.300v3h-1.300z" fill="#fff" /></svg>
            <svg width="16" height="16" viewBox="0 0 16 16"><path d="M0 12h2v2h-2zM3 10h2v4h-2zM6 8h2v6h-2zM9 6h2v8h-2zM12 3h2.500v11h-2.500z" fill="#fff" /></svg>
            <svg width="16" height="16" viewBox="0 0 16 16"><path d="M1 5.500h2.500l4-3.500v12l-4-3.500h-2.500z" fill="#fff" /><path d="M9.500 6q1.500 2 0 4M11.500 4q3 4 0 8M13.500 2.500q4 5.500 0 11" fill="none" stroke="#fff" strokeWidth="1.100" /></svg>
            <Language>ENG</Language>
            <Clock>3:00 PM<br />3/8/2017</Clock>
          </Tray>
        </Taskbar>
      </Desktop>
    </>
  );
}
